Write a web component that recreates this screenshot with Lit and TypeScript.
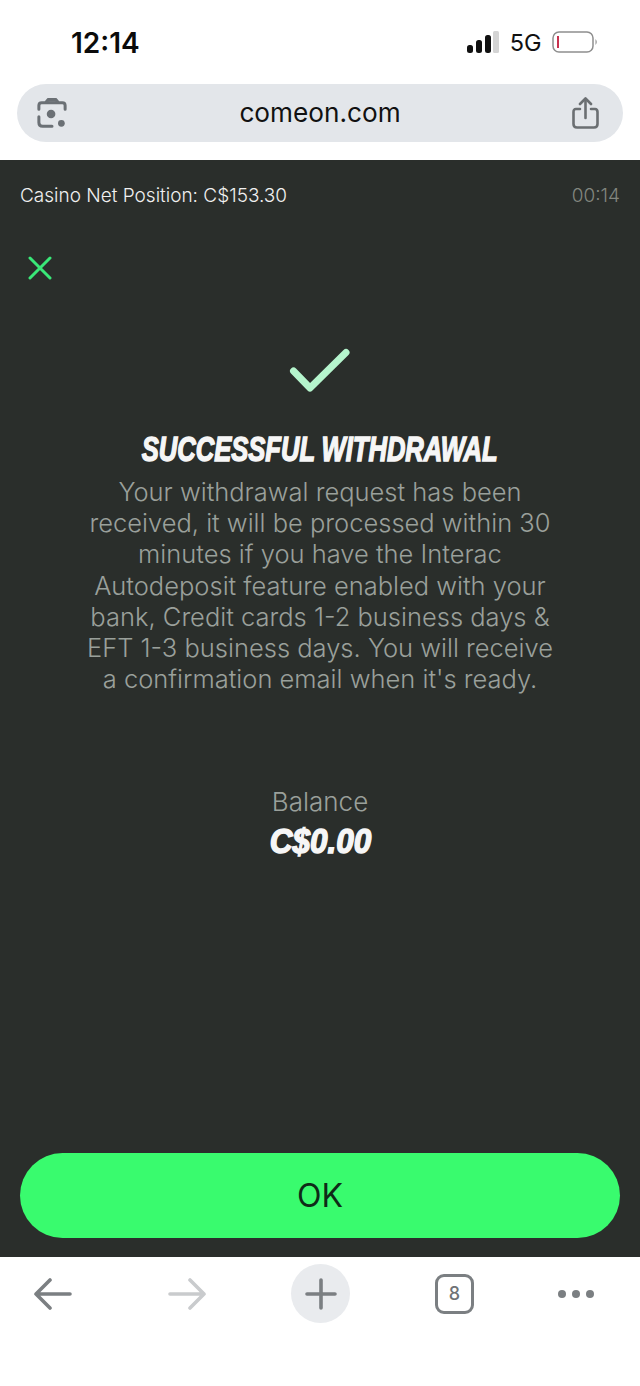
import { LitElement, html, css } from "lit";
import { customElement } from "lit/decorators.js";

@customElement("app-root")
export class AppRoot extends LitElement {
  static styles = css`
    :host { display: block; width: 640px; height: 1386px; background: #fff; font-family: Inter, "Liberation Sans", sans-serif; overflow: hidden; }
    .status { height: 84px; box-sizing: border-box; display: flex; align-items: center; padding: 0 42px 0 71px; justify-content: space-between; }
    .time { font-family: Inter, sans-serif; font-size: 28px; font-weight: 600; color: #0b0b0b; margin-top: 1px; }
    .sys { display: flex; align-items: center; gap: 10.5px; }
    .fiveg { font-size: 23.5px; font-weight: 400; color: #111; }
    .address-wrap { height: 76px; padding: 0 17px; box-sizing: border-box; }
    .address { height: 58px; border-radius: 29px; background: #e3e6ea; display: flex; align-items: center; justify-content: space-between; padding: 0 24px 0 20px; position: relative; }
    .url { position: absolute; left: 0; right: 0; text-align: center; font-size: 26.2px; font-weight: 400; color: #111; line-height: 58px; }
    .main { height: 1097px; background: #2a2e2b; display: flex; flex-direction: column; box-sizing: border-box; padding: 0 20px 19px; }
    .top { display: flex; justify-content: space-between; align-items: center; height: 71px; font-size: 19px; font-weight: 300; color: #f0f0f0; }
    .timer { color: #82867f; }
    .close { height: 28px; margin-top: 25px; margin-left: 8px; }
    .content { flex: 1; display: flex; flex-direction: column; align-items: center; }
    .check { margin-top: 64px; display: block; }
    h1 { margin: 35px 0 0; font-family: "Liberation Sans", sans-serif; font-weight: 700; font-style: italic; font-size: 35px; line-height: 40px; color: #f6f6f6; white-space: nowrap; transform: scaleX(0.73); -webkit-text-stroke: 1.5px #f6f6f6; }
    .msg { margin: 7px 0 0; font-size: 25.5px; font-weight: 300; line-height: 31.2px; text-align: center; color: #9aa09b; white-space: nowrap; }
    .bal-label { margin-top: 93px; font-size: 26px; font-weight: 300; color: #9aa09b; line-height: 30px; }
    .bal { font-family: "Liberation Sans", sans-serif; font-weight: 700; font-style: italic; font-size: 35px; line-height: 40px; color: #f6f6f6; margin-top: 4px; transform: scaleX(0.9); -webkit-text-stroke: 1.5px #f6f6f6; }
    .ok { height: 85px; border: 0; border-radius: 43px; background: #39fb6e; color: #0f2a18; font-family: Inter, sans-serif; font-size: 32px; font-weight: 400; padding: 0; }
    .toolbar { height: 129px; display: flex; align-items: flex-start; gap: 75px; padding: 7px 0 0 23px; box-sizing: border-box; }
    .slot { height: 59px; width: 59px; display: flex; align-items: center; justify-content: center; }
    .more { margin-left: -13px; }
    .plus { border-radius: 50%; background: #e9ebee; }
    .tabs { width: 39px; height: 40px; border: 3px solid #7b7f82; border-radius: 9px; box-sizing: border-box; display: flex; align-items: center; justify-content: center; font-size: 18px; font-weight: 500; color: #6f7376; }
    svg { display: block; }
  `;

  render() {
    return html`
      <div class="status">
        <div class="time">12:14</div>
        <div class="sys">
          <svg width="32" height="22" viewBox="0 0 32 22">
            <rect x="0" y="14" width="6" height="8" rx="2.5" fill="#111"/>
            <rect x="9" y="9" width="6" height="13" rx="2.5" fill="#111"/>
            <rect x="18" y="4" width="6" height="18" rx="2.5" fill="#111"/>
            <rect x="26" y="0" width="6" height="22" rx="1.5" fill="#d4d4d4"/>
          </svg>
          <span class="fiveg">5G</span>
          <svg width="46" height="22" viewBox="0 0 46 22">
            <rect x="1" y="1" width="40" height="20" rx="6" fill="#fff" stroke="#8e8e8e" stroke-width="1.5"/>
            <rect x="5" y="5" width="2" height="12" fill="#c8324f"/>
            <path d="M43.5 8 Q46 11 43.5 14 Z" fill="#8e8e8e"/>
          </svg>
        </div>
      </div>
      <div class="address-wrap">
        <div class="address">
          <svg width="30" height="30" viewBox="0 0 32 32" fill="none" stroke="#6b7075" stroke-width="3.2" stroke-linecap="round" stroke-linejoin="round">
            <path d="M2 12 V8 Q2 5 5 5 H27 Q30 5 30 8 V12"/>
            <path d="M10 4 L12 1.5 H20 L22 4" fill="#6b7075"/>
            <path d="M2 20 V26 Q2 30 6 30 H16"/>
            <circle cx="15" cy="17" r="4.6" fill="#6b7075" stroke="none"/>
            <circle cx="26" cy="27" r="3.6" fill="#6b7075" stroke="none"/>
          </svg>
          <div class="url">comeon.com</div>
          <svg width="27" height="32" viewBox="0 0 27 32" fill="none" stroke="#6b6f72" stroke-width="2.6" stroke-linecap="round" stroke-linejoin="round">
            <path d="M8 12 H4 Q1.5 12 1.5 15 V27 Q1.5 30.5 5 30.5 H22 Q25.5 30.5 25.5 27 V15 Q25.5 12 23 12 H19"/>
            <path d="M13.5 21 V2"/>
            <path d="M8 7 L13.5 1.5 L19 7"/>
          </svg>
        </div>
      </div>
      <div class="main">
        <div class="top"><span>Casino Net Position: C$153.30</span><span class="timer">00:14</span></div>
        <div class="close">
          <svg width="24" height="24" viewBox="0 0 24 24" fill="none" stroke="#39e878" stroke-width="3" stroke-linecap="round">
            <path d="M2 2 L22 22 M22 2 L2 22"/>
          </svg>
        </div>
        <div class="content">
          <svg class="check" width="62" height="46" viewBox="0 0 62 46" fill="none" stroke="#b5f5cd" stroke-width="7" stroke-linecap="round" stroke-linejoin="round">
            <path d="M4.5 23 L21 40 L57 4.5"/>
          </svg>
          <h1>SUCCESSFUL WITHDRAWAL</h1>
          <p class="msg">Your withdrawal request has been<br>received, it will be processed within 30<br>minutes if you have the Interac<br>Autodeposit feature enabled with your<br>bank, Credit cards 1-2 business days &amp;<br>EFT 1-3 business days. You will receive<br>a confirmation email when it's ready.</p>
          <div class="bal-label">Balance</div>
          <div class="bal">C$0.00</div>
        </div>
        <button class="ok">OK</button>
      </div>
      <div class="toolbar">
        <div class="slot">
          <svg width="38" height="32" viewBox="0 0 38 32" fill="none" stroke="#7b7f82" stroke-width="3.6" stroke-linecap="round" stroke-linejoin="round"><path d="M36 16 H2 M16 2 L2 16 L16 30"/></svg>
        </div>
        <div class="slot">
          <svg width="38" height="32" viewBox="0 0 38 32" fill="none" stroke="#c9cbcd" stroke-width="3.6" stroke-linecap="round" stroke-linejoin="round"><path d="M2 16 H36 M22 2 L36 16 L22 30"/></svg>
        </div>
        <div class="slot plus">
          <svg width="32" height="32" viewBox="0 0 32 32" fill="none" stroke="#7b7f82" stroke-width="3.6" stroke-linecap="round"><path d="M16 2 V30 M2 16 H30"/></svg>
        </div>
        <div class="slot"><div class="tabs">8</div></div>
        <div class="slot more">
          <svg width="38" height="10" viewBox="0 0 38 10" fill="#7b7f82"><circle cx="5" cy="5" r="4"/><circle cx="19" cy="5" r="4"/><circle cx="33" cy="5" r="4"/></svg>
        </div>
      </div>
    `;
  }
}
